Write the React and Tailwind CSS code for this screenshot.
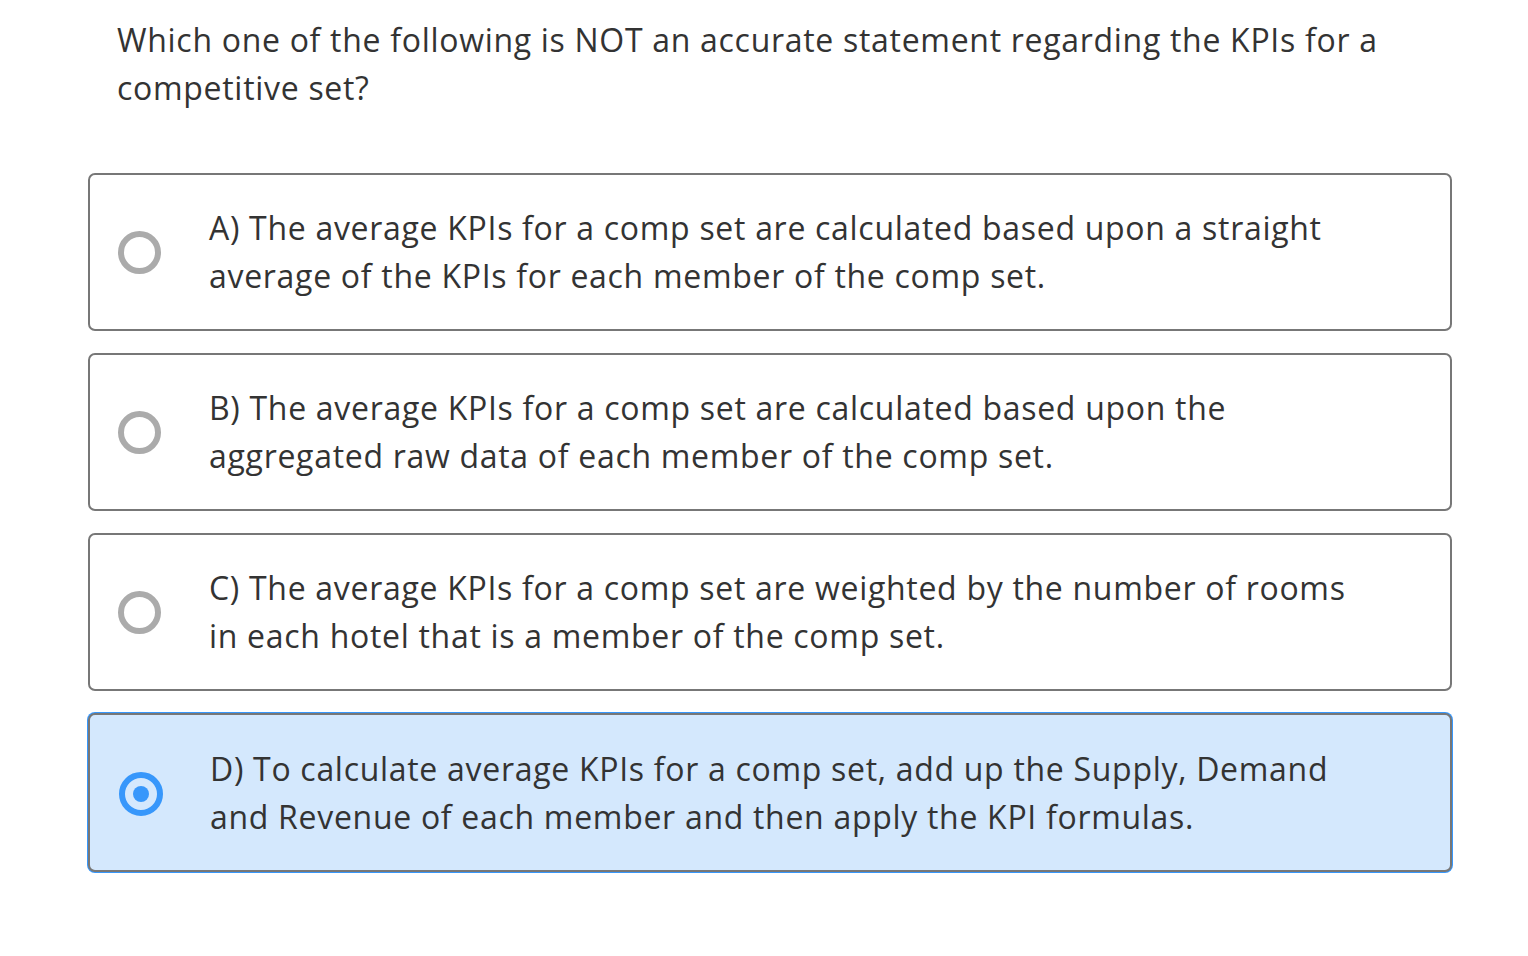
import React from "react";

const options = [
  { id: "A", text: "A) The average KPIs for a comp set are calculated based upon a straight average of the KPIs for each member of the comp set." },
  { id: "B", text: "B) The average KPIs for a comp set are calculated based upon the aggregated raw data of each member of the comp set." },
  { id: "C", text: "C) The average KPIs for a comp set are weighted by the number of rooms in each hotel that is a member of the comp set." },
  { id: "D", text: "D) To calculate average KPIs for a comp set, add up the Supply, Demand and Revenue of each member and then apply the KPI formulas." },
];

function Radio({ selected }) {
  if (selected) {
    return (
      <div className="w-[44px] h-[44px] shrink-0 ml-[1px] mt-[3px] rounded-full border-[6px] border-[#3797fb] flex items-center justify-center">
        <div className="w-[16px] h-[16px] rounded-full bg-[#3797fb]" />
      </div>
    );
  }
  return <div className="w-[43px] h-[43px] shrink-0 rounded-full border-[6px] border-[#ababab]" />;
}

export default function App() {
  return (
    <div className="w-[1528px] h-[956px] bg-white pl-[88px] pr-[76px] pt-[16px] text-[#333333] tracking-[0.7px]" style={{ fontFamily: '"Open Sans", sans-serif' }}>
      <div className="pl-[29px] text-[32px] leading-[48px]">
        Which one of the following is NOT an accurate statement regarding the KPIs for a competitive set?
      </div>
      <div className="mt-[61px] flex flex-col gap-[22px]">
        {options.map((o) => {
          const sel = o.id === "D";
          return (
            <div
              key={o.id}
              className={
                sel
                  ? "flex items-center h-[159px] rounded-[7px] border-2 border-[#777777] bg-[#d4e8fd] shadow-[0_0_0_1px_#3797fb] pl-[28px] pr-[70px]"
                  : "flex items-center h-[158px] rounded-[7px] border-2 border-[#777777] bg-white pl-[28px] pr-[70px]"
              }
            >
              <Radio selected={sel} />
              <div className={sel ? "ml-[47px] text-[32px] leading-[48px]" : "ml-[48px] text-[32px] leading-[48px]"}>{o.text}</div>
            </div>
          );
        })}
      </div>
    </div>
  );
}
